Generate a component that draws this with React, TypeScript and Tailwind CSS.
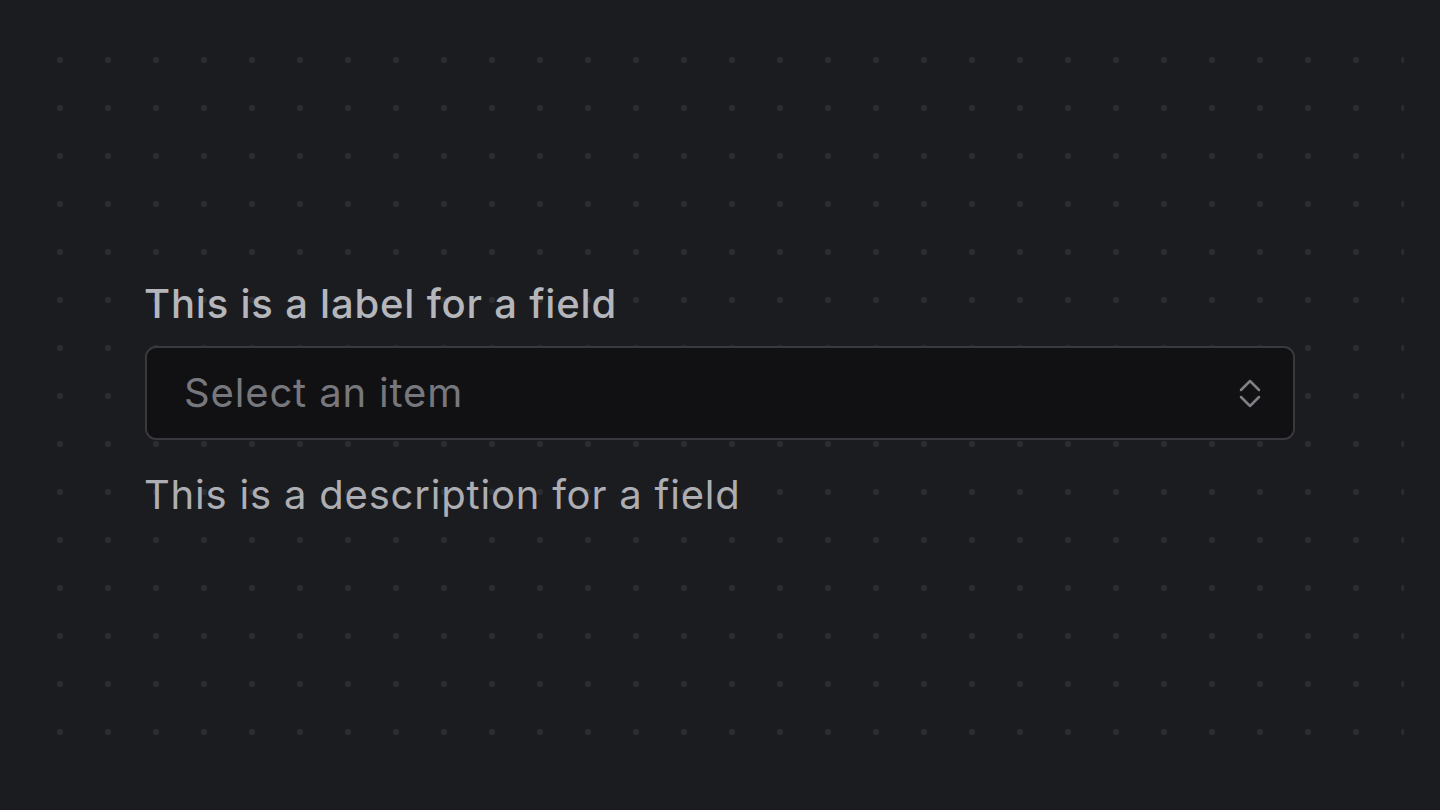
function ChevronsUpDown() {
  return (
    <svg width="22" height="32" viewBox="0 0 22 32" fill="none" stroke="currentColor" strokeWidth={2.5} strokeLinecap="round" strokeLinejoin="round">
      <path d="M2 13l9-9 9 9" />
      <path d="M2 20l9 9 9-9" />
    </svg>
  );
}

export default function App() {
  return (
    <div className="min-h-screen bg-[#1b1c1f] p-9 font-['Inter',sans-serif]">
      <div className="h-[720px] bg-[radial-gradient(circle,#2b2c30_3px,transparent_3.5px)] bg-size-[48px_48px] px-[109px] pt-[244px]">
        <div className="flex flex-col">
          <label className="-ml-px text-[40px] leading-[48px] font-medium tracking-[0.8px] text-[#b5b6bb]">
            This is a label for a field
          </label>
          <button className="mt-[18px] flex h-[94px] w-full items-center justify-between rounded-[11px] border-2 border-[#38393e] bg-[#111113] pl-[37px] pr-[32px] text-left">
            <span className="text-[40px] leading-[48px] tracking-[0.85px] text-[#77787e]">Select an item</span>
            <span className="text-[#808187]">
              <ChevronsUpDown />
            </span>
          </button>
          <p className="-ml-px mt-[31px] text-[40px] leading-[48px] tracking-[0.8px] text-[#adaeb3]">
            This is a description for a field
          </p>
        </div>
      </div>
    </div>
  );
}
